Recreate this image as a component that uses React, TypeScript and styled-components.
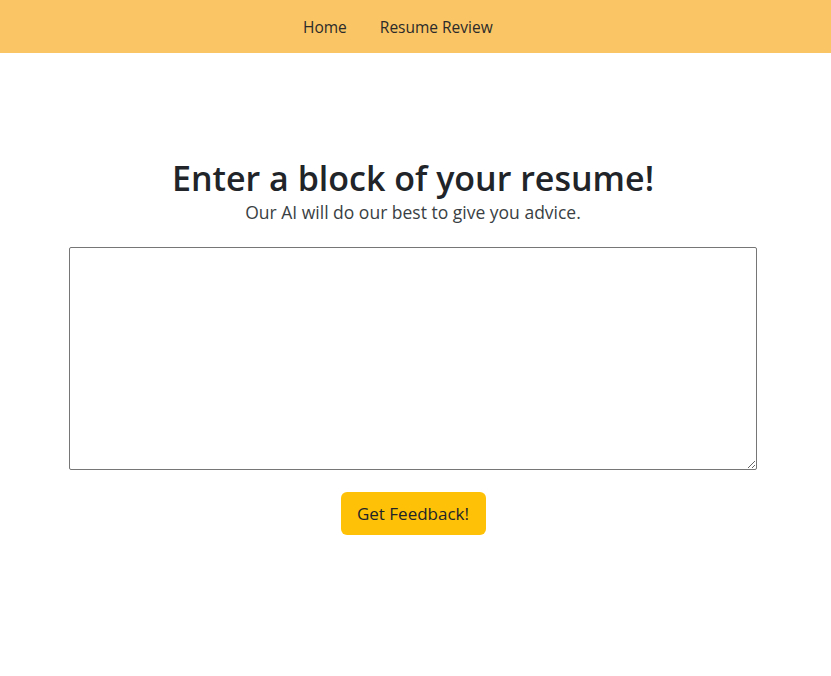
import styled, { createGlobalStyle } from "styled-components";

const GlobalStyle = createGlobalStyle`
    body {
        margin: 0;
        background: #ffffff;
        font-family: "Open Sans", "Noto Sans", sans-serif;
        color: #212529;
    }
`;

const NavBar = styled.nav`
    height: 53px;
    background: #fac564;
    display: flex;
    align-items: center;
    padding-left: 303px;
`;

const NavList = styled.div`
    display: flex;
    gap: 33px;
`;

const NavLink = styled.a`
    font-size: 15.5px;
    color: #2b2b2b;
    text-decoration: none;
`;

const Main = styled.main`
    padding: 0 74px 0 69px;
    display: flex;
    flex-direction: column;
    align-items: center;
`;

const Title = styled.h1`
    margin: 105px 0 0;
    font-size: 34px;
    font-weight: 600;
    line-height: 1.2;
    color: #212529;
`;

const Subtitle = styled.p`
    margin: 0 0 22px;
    font-size: 17.5px;
    line-height: 1.5;
    color: #3a3f44;
`;

const TextBox = styled.textarea`
    box-sizing: border-box;
    width: 688px;
    height: 223px;
    border: 1px solid #767676;
    border-radius: 2px;
    font-family: inherit;
    resize: both;
`;

const Button = styled.button`
    margin-top: 22px;
    height: 43px;
    width: 145px;
    padding: 0 16px;
    border: none;
    border-radius: 6px;
    background: #ffc107;
    color: #212529;
    font-family: inherit;
    font-size: 17px;
    cursor: pointer;
`;

const App = () => {
    return (
        <>
            <GlobalStyle />
            <NavBar>
                <NavList>
                    <NavLink href="#">Home</NavLink>
                    <NavLink href="#">Resume Review</NavLink>
                </NavList>
            </NavBar>
            <Main>
                <Title>Enter a block of your resume!</Title>
                <Subtitle>Our AI will do our best to give you advice.</Subtitle>
                <TextBox />
                <Button>Get Feedback!</Button>
            </Main>
        </>
    );
};

export default App;
